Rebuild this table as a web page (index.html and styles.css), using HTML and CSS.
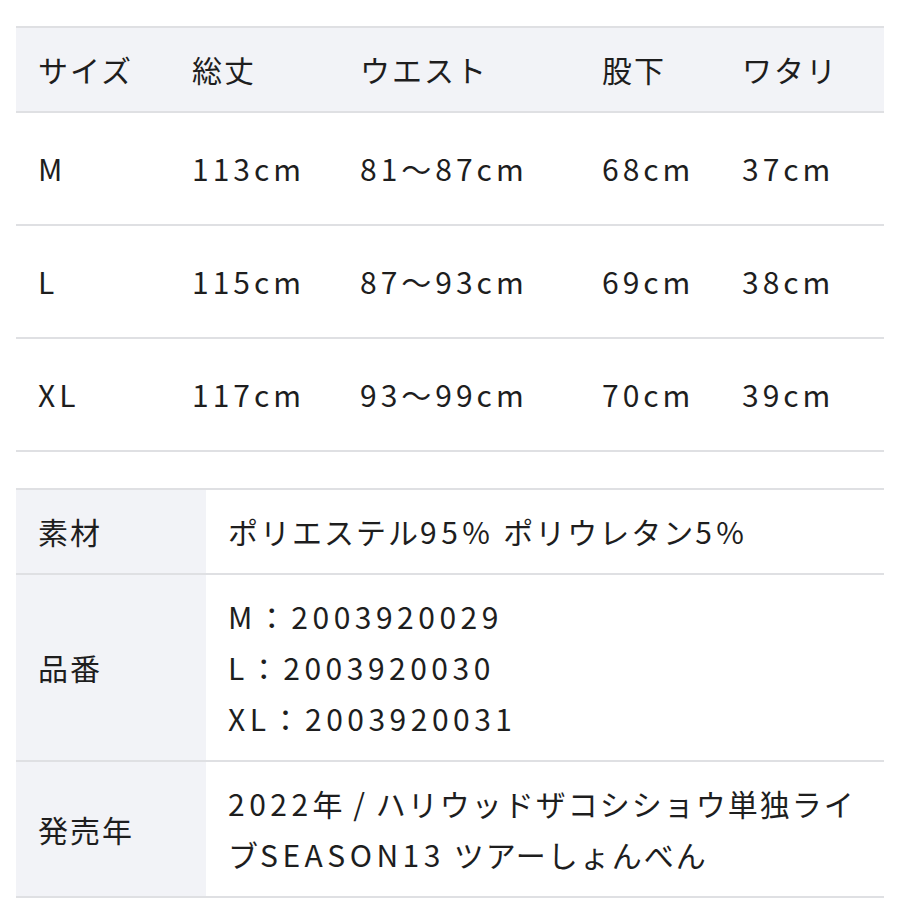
FILE: index.html
```html
<!DOCTYPE html>
<html lang="ja">
<head>
<meta charset="utf-8">
<link rel="stylesheet" href="styles.css">
</head>
<body>
<div class="page">
  <div class="size-table">
    <div class="row head">
      <div>サイズ</div><div>総丈</div><div>ウエスト</div><div>股下</div><div>ワタリ</div>
    </div>
    <div class="row data">
      <div>M</div><div>113cm</div><div>81〜87cm</div><div>68cm</div><div>37cm</div>
    </div>
    <div class="row data">
      <div>L</div><div>115cm</div><div>87〜93cm</div><div>69cm</div><div>38cm</div>
    </div>
    <div class="row data">
      <div>XL</div><div>117cm</div><div>93〜99cm</div><div>70cm</div><div>39cm</div>
    </div>
  </div>

  <div class="spec-table">
    <div class="spec">
      <div class="label">素材</div>
      <div class="value">ポリエステル<span class="en">95%</span> ポリウレタン<span class="en">5%</span></div>
    </div>
    <div class="spec">
      <div class="label">品番</div>
      <div class="value"><span class="en">M：2003920029</span><br><span class="en">L：2003920030</span><br><span class="en">XL：2003920031</span></div>
    </div>
    <div class="spec">
      <div class="label">発売年</div>
      <div class="value"><span class="en">2022</span>年 / ハリウッドザコシショウ単独ライブ<span class="en">SEASON13</span> ツアーしょんべん</div>
    </div>
  </div>
  <div class="edge"></div>
</div>
</body>
</html>
```

FILE: styles.css
```css
html, body {
  margin: 0;
  padding: 0;
  background: #ffffff;
}
body {
  font-family: "Noto Sans CJK JP", "Noto Sans", sans-serif;
  font-size: 30px;
  font-weight: 400;
  letter-spacing: 2px;
  color: #1e1e1e;
}
.en {
  letter-spacing: 4.5px;
}
.page {
  padding-top: 26px;
}
.size-table {
  margin: 0 16px;
  border-top: 2px solid #dfe0e3;
}
.row {
  display: grid;
  grid-template-columns: 154px 168px 242px 140px 1fr;
  padding: 35px 0 35px 22px;
  line-height: 41px;
  border-bottom: 2px solid #dfe0e3;
}
.row.data {
  letter-spacing: 4px;
}
.row.head {
  background: #f2f3f7;
  padding-top: 21px;
  padding-bottom: 21px;
}
.spec-table {
  margin: 36px 16px 0;
  border-top: 2px solid #dfe0e3;
}
.spec {
  display: grid;
  grid-template-columns: 190px 1fr;
  border-bottom: 2px solid #dfe0e3;
  line-height: 51px;
}
.label {
  background: #f2f3f7;
  padding: 16px 0 16px 22px;
  display: flex;
  align-items: center;
}
.value {
  padding: 16px 14px 16px 22px;
}
.edge {
  margin-top: 2px;
  height: 2px;
  background: #2a2a2a;
}
```
